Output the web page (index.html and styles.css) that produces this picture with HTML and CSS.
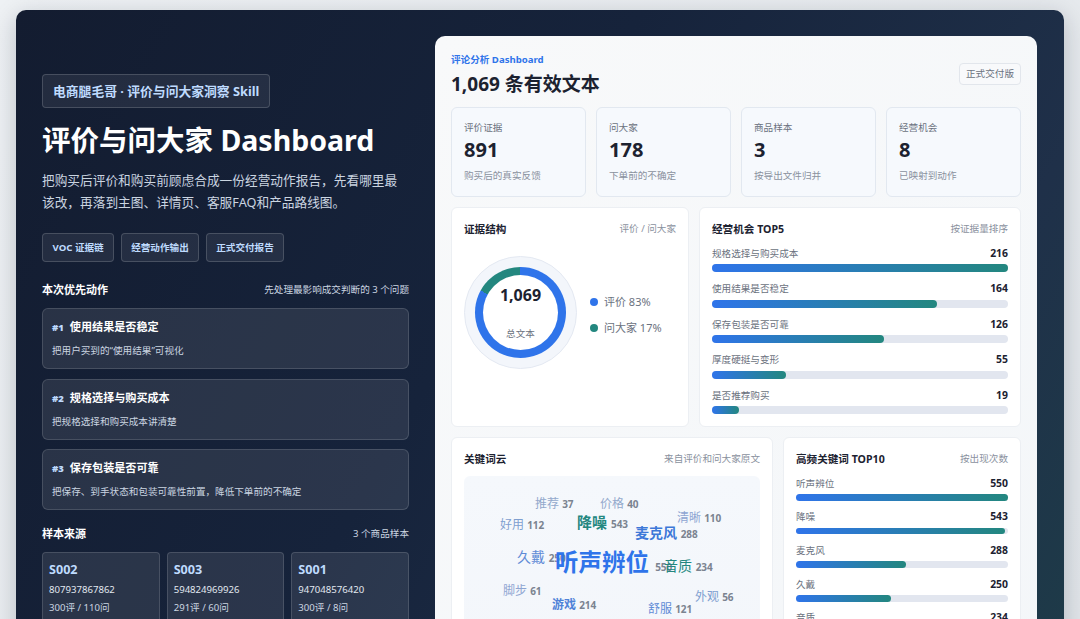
FILE: index.html
```html
<!doctype html>
<html lang="zh">
<head>
    <meta charset="utf-8">
    <title>评价与问大家 Dashboard</title>
    <link rel="stylesheet" href="styles.css">
</head>
<body>
    <div class="shell">
        <div class="left">
            <div class="pill">电商腿毛哥 · 评价与问大家洞察 Skill</div>
            <h1>评价与问大家 Dashboard</h1>
            <p class="lede">把购买后评价和购买前顾虑合成一份经营动作报告，先看哪里最该改，再落到主图、详情页、客服FAQ和产品路线图。</p>
            <div class="chips">
                <span class="chip">VOC 证据链</span>
                <span class="chip">经营动作输出</span>
                <span class="chip">正式交付报告</span>
            </div>

            <div class="left-head actions-head">
                <h2>本次优先动作</h2>
                <span>先处理最影响成交判断的 3 个问题</span>
            </div>
            <div class="actions">
                <div class="action">
                    <div class="action-title"><b>#1</b>使用结果是否稳定</div>
                    <div class="action-sub">把用户买到的“使用结果”可视化</div>
                </div>
                <div class="action">
                    <div class="action-title"><b>#2</b>规格选择与购买成本</div>
                    <div class="action-sub">把规格选择和购买成本讲清楚</div>
                </div>
                <div class="action">
                    <div class="action-title"><b>#3</b>保存包装是否可靠</div>
                    <div class="action-sub">把保存、到手状态和包装可靠性前置，降低下单前的不确定</div>
                </div>
            </div>

            <div class="left-head samples-head">
                <h2>样本来源</h2>
                <span>3 个商品样本</span>
            </div>
            <div class="samples">
                <div class="sample">
                    <h3>S002</h3>
                    <div class="sample-id">807937867862</div>
                    <div class="sample-count">300评 / 110问</div>
                </div>
                <div class="sample">
                    <h3>S003</h3>
                    <div class="sample-id">594824969926</div>
                    <div class="sample-count">291评 / 60问</div>
                </div>
                <div class="sample">
                    <h3>S001</h3>
                    <div class="sample-id">947048576420</div>
                    <div class="sample-count">300评 / 8问</div>
                </div>
            </div>
        </div>

        <div class="panel">
            <div class="panel-head">
                <div>
                    <div class="eyebrow">评论分析 Dashboard</div>
                    <div class="panel-title">1,069 条有效文本</div>
                </div>
                <span class="tag">正式交付版</span>
            </div>

            <div class="kpis">
                <div class="kpi">
                    <div class="kpi-label">评价证据</div>
                    <div class="kpi-value">891</div>
                    <div class="kpi-sub">购买后的真实反馈</div>
                </div>
                <div class="kpi">
                    <div class="kpi-label">问大家</div>
                    <div class="kpi-value">178</div>
                    <div class="kpi-sub">下单前的不确定</div>
                </div>
                <div class="kpi">
                    <div class="kpi-label">商品样本</div>
                    <div class="kpi-value">3</div>
                    <div class="kpi-sub">按导出文件归并</div>
                </div>
                <div class="kpi">
                    <div class="kpi-label">经营机会</div>
                    <div class="kpi-value">8</div>
                    <div class="kpi-sub">已映射到动作</div>
                </div>
            </div>

            <div class="row row-a">
                <div class="card">
                    <div class="card-head"><h4>证据结构</h4><span>评价 / 问大家</span></div>
                    <div class="donut-wrap">
                        <div class="donut-outer">
                            <div class="donut-ring">
                                <div class="donut-hole">
                                    <strong>1,069</strong>
                                    <span>总文本</span>
                                </div>
                            </div>
                        </div>
                        <div class="legend">
                            <div class="legend-item"><i class="dot blue"></i>评价 83%</div>
                            <div class="legend-item"><i class="dot teal"></i>问大家 17%</div>
                        </div>
                    </div>
                </div>
                <div class="card">
                    <div class="card-head"><h4>经营机会 TOP5</h4><span>按证据量排序</span></div>
                    <div class="bars">
                        <div class="bar-row">
                            <div class="bar-text"><span>规格选择与购买成本</span><b>216</b></div>
                            <div class="track"><div class="fill" style="width:100%"></div></div>
                        </div>
                        <div class="bar-row">
                            <div class="bar-text"><span>使用结果是否稳定</span><b>164</b></div>
                            <div class="track"><div class="fill" style="width:76%"></div></div>
                        </div>
                        <div class="bar-row">
                            <div class="bar-text"><span>保存包装是否可靠</span><b>126</b></div>
                            <div class="track"><div class="fill" style="width:58%"></div></div>
                        </div>
                        <div class="bar-row">
                            <div class="bar-text"><span>厚度硬挺与变形</span><b>55</b></div>
                            <div class="track"><div class="fill" style="width:25%"></div></div>
                        </div>
                        <div class="bar-row">
                            <div class="bar-text"><span>是否推荐购买</span><b>19</b></div>
                            <div class="track"><div class="fill" style="width:9%"></div></div>
                        </div>
                    </div>
                </div>
            </div>

            <div class="row row-b">
                <div class="card">
                    <div class="card-head"><h4>关键词云</h4><span>来自评价和问大家原文</span></div>
                    <div class="cloud">
                        <span class="word w-tuijian">推荐 <em>37</em></span>
                        <span class="word w-jiage">价格 <em>40</em></span>
                        <span class="word w-qingxi">清晰 <em>110</em></span>
                        <span class="word w-haoyong">好用 <em>112</em></span>
                        <span class="word w-jiangzao">降噪 <em>543</em></span>
                        <span class="word w-maikefeng">麦克风 <em>288</em></span>
                        <span class="word w-jiudai">久戴 <em>250</em></span>
                        <span class="word w-tingsheng">听声辨位 <em>550</em></span>
                        <span class="word w-yinzhi">音质 <em>234</em></span>
                        <span class="word w-jiaobu">脚步 <em>61</em></span>
                        <span class="word w-waiguan">外观 <em>56</em></span>
                        <span class="word w-youxi">游戏 <em>214</em></span>
                        <span class="word w-shufu">舒服 <em>121</em></span>
                    </div>
                </div>
                <div class="card">
                    <div class="card-head"><h4>高频关键词 TOP10</h4><span>按出现次数</span></div>
                    <div class="bars bars-small">
                        <div class="bar-row">
                            <div class="bar-text"><span>听声辨位</span><b>550</b></div>
                            <div class="track"><div class="fill" style="width:100%"></div></div>
                        </div>
                        <div class="bar-row">
                            <div class="bar-text"><span>降噪</span><b>543</b></div>
                            <div class="track"><div class="fill" style="width:98.7%"></div></div>
                        </div>
                        <div class="bar-row">
                            <div class="bar-text"><span>麦克风</span><b>288</b></div>
                            <div class="track"><div class="fill" style="width:52%"></div></div>
                        </div>
                        <div class="bar-row">
                            <div class="bar-text"><span>久戴</span><b>250</b></div>
                            <div class="track"><div class="fill" style="width:45%"></div></div>
                        </div>
                        <div class="bar-row">
                            <div class="bar-text"><span>音质</span><b>234</b></div>
                            <div class="track"><div class="fill" style="width:42.5%"></div></div>
                        </div>
                    </div>
                </div>
            </div>
        </div>
    </div>
</body>
</html>
```
FILE: styles.css
```css
* {
    box-sizing: border-box;
}
html, body {
    height: 619px;
    overflow: hidden;
}
body {
    margin: 0;
    padding: 10px 16px 0;
    background: linear-gradient(135deg, #eef1f4, #e1e5e9);
    font-family: "Noto Sans", "Noto Sans CJK SC", sans-serif;
    color: #1c2230;
}
.shell {
    display: flex;
    gap: 26px;
    height: 900px;
    padding: 26px 27px 0 26px;
    border-radius: 10px;
    background: linear-gradient(120deg, #131c30 0%, #16233b 40%, #1f3049 72%, #1d4048 100%);
    box-shadow: 0 6px 24px rgba(15, 23, 42, 0.22);
}

/* left column */
.left {
    width: 367px;
    flex: none;
    padding-top: 38px;
    color: #fff;
}
.pill {
    display: inline-block;
    height: 34px;
    line-height: 32px;
    padding: 0 10px;
    border: 1px solid rgba(255, 255, 255, 0.16);
    border-radius: 4px;
    background: rgba(255, 255, 255, 0.07);
    color: #bfdbfe;
    font-size: 12.8px;
    font-weight: 700;
}
h1 {
    margin: 12px 0 0;
    font-size: 28.5px;
    line-height: 40px;
    font-weight: 700;
}
.lede {
    margin: 9px 0 0;
    font-size: 12.7px;
    line-height: 22px;
    color: #cbd5e1;
}
.chips {
    display: flex;
    gap: 6.5px;
    margin-top: 20px;
}
.chip {
    height: 29px;
    line-height: 27px;
    padding: 0 9.5px;
    border: 1px solid rgba(255, 255, 255, 0.16);
    border-radius: 4px;
    background: rgba(255, 255, 255, 0.07);
    color: #bfdbfe;
    font-size: 9.6px;
    font-weight: 700;
}
.left-head {
    display: flex;
    justify-content: space-between;
    align-items: center;
    font-size: 9.6px;
    color: #cbd5e1;
}
.left-head h2 {
    margin: 0;
    font-size: 11px;
    font-weight: 700;
    color: #fff;
}
.actions-head {
    margin-top: 19px;
}
.samples-head {
    margin-top: 15px;
}
.actions {
    display: flex;
    flex-direction: column;
    gap: 9.7px;
    margin-top: 11px;
}
.action {
    height: 61px;
    padding: 10px 9px;
    border: 1px solid rgba(255, 255, 255, 0.14);
    border-radius: 6px;
    background: rgba(255, 255, 255, 0.09);
}
.action-title {
    font-size: 11.1px;
    line-height: 16px;
    font-weight: 700;
}
.action-title b {
    margin-right: 6px;
    font-size: 9.5px;
    color: #bfdbfe;
}
.action-sub {
    margin-top: 7px;
    font-size: 9.6px;
    line-height: 15px;
    color: #cbd5e1;
}
.samples {
    display: grid;
    grid-template-columns: repeat(3, 1fr);
    gap: 7px;
    margin-top: 11px;
}
.sample {
    height: 90px;
    padding: 8px 6px;
    border: 1px solid rgba(255, 255, 255, 0.14);
    border-radius: 4px;
    background: rgba(255, 255, 255, 0.09);
}
.sample h3 {
    margin: 0;
    font-size: 12.6px;
    line-height: 18px;
    font-weight: 700;
    color: #bfdbfe;
}
.sample-id, .sample-count {
    font-size: 9.6px;
    line-height: 18px;
    color: #e2e8f0;
}
.sample-id {
    margin-top: 2px;
}
.sample-count {
    color: #cbd5e1;
}

/* right panel */
.panel {
    width: 602px;
    flex: none;
    padding: 16px;
    border-radius: 10px;
    background: linear-gradient(135deg, #f8f9fa, #f3f6f9);
}
.panel-head {
    display: flex;
    justify-content: space-between;
    align-items: flex-start;
}
.eyebrow {
    font-size: 9.6px;
    line-height: 15px;
    font-weight: 700;
    color: #2f74ea;
}
.panel-title {
    margin-top: 3px;
    font-size: 19px;
    line-height: 28px;
    font-weight: 700;
}
.tag {
    margin-top: 11px;
    height: 22px;
    line-height: 20px;
    padding: 0 6px;
    border: 1px solid #e2e6ec;
    border-radius: 4px;
    background: #f8f9fb;
    color: #6b7280;
    font-size: 9.6px;
}
.kpis {
    display: grid;
    grid-template-columns: repeat(4, 135px);
    gap: 10px;
    margin-top: 9px;
}
.kpi {
    height: 90px;
    padding: 12px 12px 0;
    border: 1px solid #e2e8f0;
    border-radius: 6px;
    background: #f6f9fd;
}
.kpi-label {
    font-size: 9.6px;
    line-height: 15px;
    color: #6b7280;
}
.kpi-value {
    margin-top: 1px;
    font-size: 20px;
    line-height: 28px;
    font-weight: 700;
}
.kpi-sub {
    margin-top: 4px;
    font-size: 9.6px;
    line-height: 15px;
    color: #8a919e;
}
.row {
    display: grid;
    gap: 10px;
    margin-top: 10px;
}
.row-a {
    grid-template-columns: 238px 322px;
}
.row-b {
    grid-template-columns: 322px 238px;
}
.card {
    height: 220px;
    padding: 12px;
    border: 1px solid #eceff3;
    border-radius: 6px;
    background: #fff;
}
.row-b .card {
    height: 400px;
}
.card-head {
    display: flex;
    justify-content: space-between;
    align-items: center;
    height: 16px;
    font-size: 9.6px;
    color: #8a919e;
}
.card-head h4 {
    margin: 0;
    font-size: 10.6px;
    font-weight: 700;
    color: #1c2230;
}

/* donut */
.donut-wrap {
    display: flex;
    align-items: center;
    gap: 13px;
    margin-top: 20px;
}
.donut-outer {
    display: flex;
    align-items: center;
    justify-content: center;
    width: 113px;
    height: 113px;
    border: 1px solid #e4e9f2;
    border-radius: 50%;
    background: #f3f6fb;
}
.donut-ring {
    display: flex;
    align-items: center;
    justify-content: center;
    width: 91px;
    height: 91px;
    border-radius: 50%;
    background: conic-gradient(#2f74ea 0 299deg, #23877f 299deg 360deg);
}
.donut-hole {
    display: flex;
    flex-direction: column;
    align-items: center;
    justify-content: space-between;
    width: 75px;
    height: 75px;
    padding: 9px 0 9px;
    border-radius: 50%;
    background: #fff;
}
.donut-hole strong {
    font-size: 16px;
    line-height: 22px;
    font-weight: 700;
}
.donut-hole span {
    font-size: 9.6px;
    line-height: 14px;
    color: #6b7280;
}
.legend {
    display: flex;
    flex-direction: column;
    gap: 9px;
    margin-top: 4px;
}
.legend-item {
    display: flex;
    align-items: center;
    gap: 6px;
    font-size: 11px;
    line-height: 17px;
    color: #6b7280;
}
.dot {
    width: 8px;
    height: 8px;
    border-radius: 50%;
}
.blue {
    background: #2f74ea;
}
.teal {
    background: #23877f;
}

/* bars */
.bars {
    display: flex;
    flex-direction: column;
    gap: 8.5px;
    margin-top: 9px;
}
.bar-text {
    display: flex;
    justify-content: space-between;
    align-items: center;
    height: 15px;
    font-size: 9.6px;
    color: #6b7280;
}
.bar-text b {
    font-size: 10.4px;
    font-weight: 700;
    color: #1c2230;
}
.track {
    height: 8px;
    margin-top: 4px;
    border-radius: 4px;
    background: #e2e6ef;
}
.fill {
    height: 100%;
    border-radius: 4px;
    background: linear-gradient(90deg, #2f74ea, #23877f);
}
.bars-small {
    gap: 8.2px;
    margin-top: 9px;
}
.bars-small .track {
    height: 6.5px;
    margin-top: 4px;
}

/* word cloud */
.cloud {
    position: relative;
    height: 300px;
    margin-top: 10px;
    border-radius: 6px;
    background: linear-gradient(180deg, #f5f8fc, #f2f5fa);
}
.word {
    position: absolute;
    font-size: 12px;
    line-height: 18px;
    white-space: nowrap;
    color: #93a9cc;
}
.word em {
    font-style: normal;
    font-size: 10px;
    font-weight: 700;
    color: #7b8390;
}
.w-tuijian { left: 71px; top: 19px; }
.w-jiage { left: 136px; top: 19px; }
.w-qingxi { left: 213px; top: 33px; color: #8ea5d2; }
.w-haoyong { left: 36px; top: 40px; color: #7f9fd0; }
.w-jiangzao { left: 113px; top: 37px; font-size: 15px; font-weight: 700; color: #23877f; }
.w-maikefeng { left: 171px; top: 48px; font-size: 14px; font-weight: 700; color: #3d78d8; }
.w-jiudai { left: 53px; top: 72px; font-size: 14px; color: #5f8bd6; }
.w-tingsheng { left: 91px; top: 70px; font-size: 23.5px; line-height: 32px; font-weight: 700; color: #2f74ea; }
.w-yinzhi { left: 200px; top: 81px; font-size: 14px; color: #23877f; }
.w-jiaobu { left: 39px; top: 106px; color: #8ea5d2; }
.w-waiguan { left: 231px; top: 112px; color: #7f9fd0; }
.w-youxi { left: 88px; top: 120px; font-weight: 700; color: #4f82d8; }
.w-shufu { left: 184px; top: 124px; color: #5f8bd6; }
```
